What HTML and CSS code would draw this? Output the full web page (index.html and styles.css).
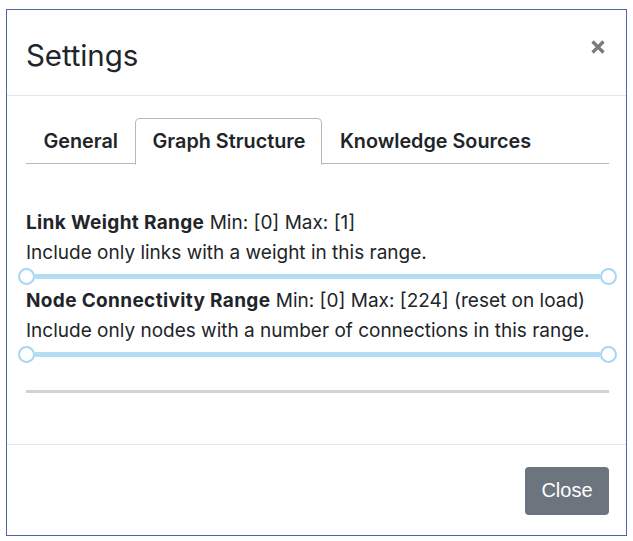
FILE: index.html
```html
<!DOCTYPE html>
<html>
<head>
<meta charset="utf-8">
<link rel="stylesheet" href="styles.css">
</head>
<body>
<div class="frame">
  <div class="modal-header">
    <h5 class="modal-title">Settings</h5>
    <button class="close" type="button" aria-label="Close">
      <svg width="16" height="16" viewBox="0 0 16 16"><path d="M2.5 2.5 L13.5 13.5 M13.5 2.5 L2.5 13.5" stroke="#7a7a7a" stroke-width="3.2" stroke-linecap="butt"/></svg>
    </button>
  </div>
  <div class="modal-body">
    <ul class="tabs">
      <li class="tab">General</li>
      <li class="tab active">Graph Structure</li>
      <li class="tab">Knowledge Sources</li>
    </ul>
    <div class="pane">
      <p class="line"><b>Link Weight Range</b> Min: [0] Max: [1]</p>
      <p class="line">Include only links with a weight in this range.</p>
      <div class="slider"><span class="thumb"></span><span class="track"></span><span class="thumb"></span></div>
      <p class="line"><b>Node Connectivity Range</b> Min: [0] Max: [224] (reset on load)</p>
      <p class="line">Include only nodes with a number of connections in this range.</p>
      <div class="slider"><span class="thumb"></span><span class="track"></span><span class="thumb"></span></div>
      <hr class="rule">
    </div>
  </div>
  <div class="modal-footer">
    <button class="btn" type="button">Close</button>
  </div>
</div>
</body>
</html>
```

FILE: styles.css
```css
* { box-sizing: border-box; }
html, body { margin: 0; padding: 0; background: #fff; }
body {
  font-family: Inter, "Noto Sans", "Liberation Sans", sans-serif;
  color: #212529;
}
.frame {
  margin: 9px 0 0 6px;
  width: 621px;
  height: 527px;
  border: 1.5px solid #4b67a6;
  display: flex;
  flex-direction: column;
  background: #fff;
}
.modal-header {
  height: 86px;
  border-bottom: 1px solid #e5e5e5;
  display: flex;
  align-items: center;
  justify-content: space-between;
  padding: 0 20px 0 19px;
}
.modal-title {
  margin: 4px 0 0 0;
  font-size: 29.5px;
  font-weight: 400;
  letter-spacing: -0.1px;
}
.close {
  background: none;
  border: 0;
  padding: 0;
  margin: 0 0 12px 0;
  width: 16px;
  height: 16px;
  display: flex;
}
.modal-body {
  padding: 22px 17px 0 19px;
  height: 349px;
  border-bottom: 1px solid #e5e5e5;
}
.tabs {
  list-style: none;
  margin: 0;
  padding: 0;
  display: flex;
  height: 46px;
  border-bottom: 1.5px solid #b8b8b8;
}
.tab {
  font-size: 19.8px;
  font-weight: 600;
  padding: 0 16px 0 16.5px;
  display: flex;
  align-items: center;
  height: 45px;
  margin-bottom: -1.5px;
  border: 1px solid transparent;
  border-radius: 5px 5px 0 0;
}
.tab.active {
  border-color: #b8b8b8;
  border-bottom-color: #fff;
  background: #fff;
  height: 46.5px;
}
.pane {
  padding-top: 44px;
}
.line {
  margin: 0;
  font-size: 19px;
  line-height: 30px;
}
.line b { font-weight: 700; letter-spacing: 0.35px; }
.slider {
  display: flex;
  align-items: center;
  height: 16px;
  margin: 0 -8px 2px;
}
.thumb {
  width: 17px;
  height: 17px;
  border-radius: 50%;
  border: 2px solid #a5d6f2;
  background: #fff;
  flex: none;
}
.track {
  flex: 1;
  height: 5px;
  background: #b4ddf5;
}
.rule {
  margin: 28px 0 0 0;
  border: 0;
  height: 3px;
  background: #d2d2d2;
}
.modal-footer {
  flex: 1;
  display: flex;
  align-items: center;
  justify-content: flex-end;
  padding: 0 17px 0 0;
}
.btn {
  font-family: "Liberation Sans", Arial, sans-serif;
  background: #6c757d;
  color: #fff;
  border: 0;
  border-radius: 4px;
  width: 84px;
  height: 48px;
  font-size: 20px;
  margin-top: 1px;
}
```
